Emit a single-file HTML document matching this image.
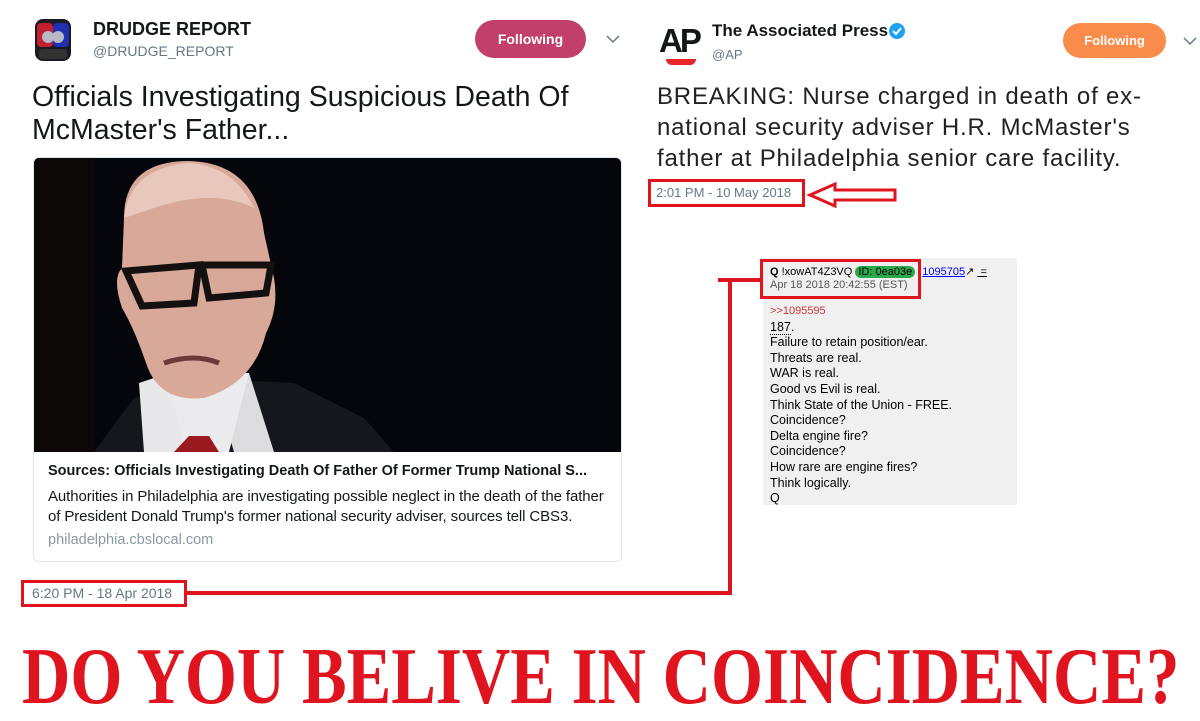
<!DOCTYPE html>
<html><head><meta charset="utf-8"><style>
*{margin:0;padding:0;box-sizing:border-box}
body{width:1200px;height:717px;background:#fff;position:relative;overflow:hidden;font-family:"Liberation Sans",sans-serif;color:#14171a}
.a{position:absolute;white-space:nowrap}
</style></head><body>
<svg class="a" style="left:33px;top:17px" width="40" height="46" viewBox="0 0 40 46">
<rect x="2" y="2" width="36" height="42" rx="8" fill="#1a1a22"/>
<rect x="4" y="6" width="16" height="24" rx="4" fill="#c02030"/>
<rect x="20" y="6" width="16" height="24" rx="4" fill="#2030b0"/>
<circle cx="15" cy="20" r="6" fill="#b8b8c8"/><circle cx="25" cy="20" r="6" fill="#b8b8c8"/>
<rect x="6" y="32" width="28" height="10" rx="3" fill="#333"/>
</svg>
<div class="a" style="left:93px;top:19px;font-weight:bold;font-size:18px">DRUDGE REPORT</div>
<div class="a" style="left:93px;top:43px;font-size:14px;color:#657786">@DRUDGE_REPORT</div>
<div class="a" style="left:475px;top:20px;width:111px;height:38px;border-radius:19px;background:#c13f6a;color:#fff;font-weight:bold;font-size:14px;line-height:38px;text-align:center">Following</div>
<svg class="a" style="left:606px;top:34px" width="14" height="10"><path d="M1 2l6 6 6-6" fill="none" stroke="#657786" stroke-width="1.5"/></svg>
<div class="a" style="left:32px;top:81px;font-size:28.5px;line-height:33px">Officials Investigating Suspicious Death Of<br>McMaster's Father...</div>
<div class="a" style="left:33px;top:157px;width:589px;height:405px;border:1px solid #e1e8ed;border-radius:6px;overflow:hidden">
<svg width="589" height="294" viewBox="0 0 589 294" style="display:block">
<rect width="589" height="294" fill="#05060c"/>
<rect width="60" height="294" fill="#0d0808"/>
<path d="M60 294 L100 240 L160 220 L260 225 L330 260 L360 294Z" fill="#16171c"/>
<path d="M105 225 L135 215 L160 294 L110 294Z" fill="#e8e8ea"/>
<path d="M180 225 L215 215 L240 294 L200 294Z" fill="#dddde0"/>
<path d="M135 215 L215 215 L195 294 L150 294Z" fill="#ebebee"/>
<path d="M140 294 L155 278 L175 278 L185 294Z" fill="#9a1a20"/>
<path d="M90 60 Q90 3 155 3 Q222 5 230 75 L240 120 Q245 150 232 175 Q220 225 170 240 Q125 245 112 205 Q100 170 88 150 Q78 120 88 110Z" fill="#d8a898"/>
<path d="M90 60 Q95 10 155 5 Q200 8 220 50 Q180 30 120 50Z" fill="#e8c8bc"/>
<path d="M92 113 L165 107 L160 145 L108 148Z M168 107 L237 107 L232 135 L175 140Z" fill="none" stroke="#141010" stroke-width="7"/>
<path d="M130 205 Q160 195 185 205" stroke="#6a3a38" stroke-width="5" fill="none"/>
</svg>
<div style="padding:9px 14px 0">
<div style="font-weight:bold;font-size:14.5px;line-height:20px">Sources: Officials Investigating Death Of Father Of Former Trump National S...</div>
<div style="font-size:15px;line-height:20px;margin-top:6px;letter-spacing:-0.1px">Authorities in Philadelphia are investigating possible neglect in the death of the father<br>of President Donald Trump's former national security adviser, sources tell CBS3.</div>
<div style="font-size:14.5px;line-height:20px;margin-top:3px;color:#8899a6">philadelphia.cbslocal.com</div>
</div></div>
<div class="a" style="left:21px;top:580px;width:166px;height:27px;border:3px solid #e0141e;font-size:14px;line-height:21px;color:#657786;padding-left:8px">6:20 PM - 18 Apr 2018</div>
<div class="a" style="left:187px;top:591px;width:545px;height:4px;background:#e0141e"></div>
<div class="a" style="left:728px;top:278px;width:4px;height:317px;background:#e0141e"></div>
<div class="a" style="left:718px;top:278px;width:44px;height:4px;background:#e0141e"></div>
<div class="a" style="left:659px;top:22px;font-weight:bold;font-size:33px;letter-spacing:-3px">AP</div>
<div class="a" style="left:666px;top:59px;width:30px;height:6px;border-radius:0 0 15px 15px;background:#e8262a"></div>
<div class="a" style="left:712px;top:21px;font-weight:bold;font-size:17px">The Associated Press</div>
<svg class="a" style="left:888px;top:22px" width="18" height="18"><circle cx="9" cy="9" r="8" fill="#1da1f2"/><path d="M5 9l3 3 5-6" stroke="#fff" stroke-width="2" fill="none"/></svg>
<div class="a" style="left:712px;top:47px;font-size:13px;color:#657786">@AP</div>
<div class="a" style="left:1063px;top:23px;width:103px;height:35px;border-radius:18px;background:#f98b4b;color:#fff;font-weight:bold;font-size:13px;line-height:35px;text-align:center">Following</div>
<svg class="a" style="left:1183px;top:36px" width="14" height="10"><path d="M1 2l6 6 6-6" fill="none" stroke="#657786" stroke-width="1.5"/></svg>
<div class="a" style="left:657px;top:81px;font-size:24px;line-height:31px;color:#222;letter-spacing:0.8px">BREAKING: Nurse charged in death of ex-<br>national security adviser H.R. McMaster's<br>father at Philadelphia senior care facility.</div>
<div class="a" style="left:648px;top:179px;width:157px;height:28px;border:3px solid #e0141e;font-size:13px;line-height:22px;color:#657786;padding-left:5px">2:01 PM - 10 May 2018</div>
<svg class="a" style="left:805px;top:180px" width="95" height="30"><path d="M5 15 L30 4 L30 10 L90 10 L90 20 L30 20 L30 26Z" fill="none" stroke="#e0141e" stroke-width="3"/></svg>
<div class="a" style="left:763px;top:258px;width:254px;height:247px;background:#f0f0f0"></div>
<div class="a" style="left:770px;top:266px;font-size:11px;line-height:13px;color:#000"><b>Q</b> !xowAT4Z3VQ <span style="background:#2aa84a;border-radius:7px;padding:0 3px">ID: 0ea03e</span> <span style="color:#00e;text-decoration:underline;margin-left:4px">1095705</span>↗ <u>&nbsp;=</u><br><span style="color:#555">Apr 18 2018 20:42:55 (EST)</span></div>
<div class="a" style="left:760px;top:259px;width:161px;height:40px;border:3px solid #e0141e"></div>
<div class="a" style="left:770px;top:303px;font-size:12.5px;line-height:15.6px;color:#000"><span style="color:#c33;font-size:11px">&gt;&gt;1095595</span><br><span style="border-bottom:1px dotted #000">187</span>.<br>Failure to retain position/ear.<br>Threats are real.<br>WAR is real.<br>Good vs Evil is real.<br>Think State of the Union - FREE.<br>Coincidence?<br>Delta engine fire?<br>Coincidence?<br>How rare are engine fires?<br>Think logically.<br>Q</div>
<div class="a" style="left:22px;top:636px;font-family:'Liberation Serif',serif;font-weight:bold;font-size:81px;line-height:80px;color:#e0141e;transform:scaleX(0.826);transform-origin:0 0">DO YOU BELIVE IN COINCIDENCE?</div>
</body></html>
